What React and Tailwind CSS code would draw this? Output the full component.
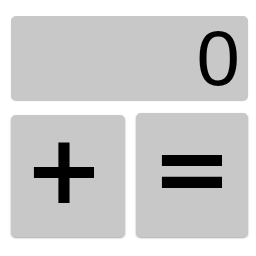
import React from "react";

export default function App() {
  return (
    <div className="w-[256px] h-[256px] bg-white pt-[16px] pl-[11px] pr-[8px]" style={{ fontFamily: '"Liberation Sans", Arial, sans-serif' }}>
      {/* display */}
      <div className="h-[84px] w-[237px] rounded-[5px] bg-[#c8c8c8] shadow-[0_1px_1px_rgba(0,0,0,0.25)] flex items-center justify-end pr-[8px]">
        <span className="text-[78px] leading-none text-black">0</span>
      </div>
      {/* keys */}
      <div className="flex gap-[11px] mt-[15px] w-[237px]">
        <button className="w-[114px] h-[122px] rounded-[5px] bg-[#c8c8c8] shadow-[0_1px_2px_rgba(0,0,0,0.35)] flex items-center justify-center pb-[12px] pr-[8px] text-black text-[96px] leading-none font-bold" style={{ fontFamily: '"DejaVu Sans", sans-serif' }}>
          +
        </button>
        <button className="w-[112px] h-[124px] -mt-[2px] rounded-[5px] bg-[#c8c8c8] shadow-[0_1px_2px_rgba(0,0,0,0.35)] flex items-center justify-center pb-[12px] text-black text-[96px] leading-none font-bold" style={{ fontFamily: '"DejaVu Sans", sans-serif' }}>
          =
        </button>
      </div>
    </div>
  );
}
